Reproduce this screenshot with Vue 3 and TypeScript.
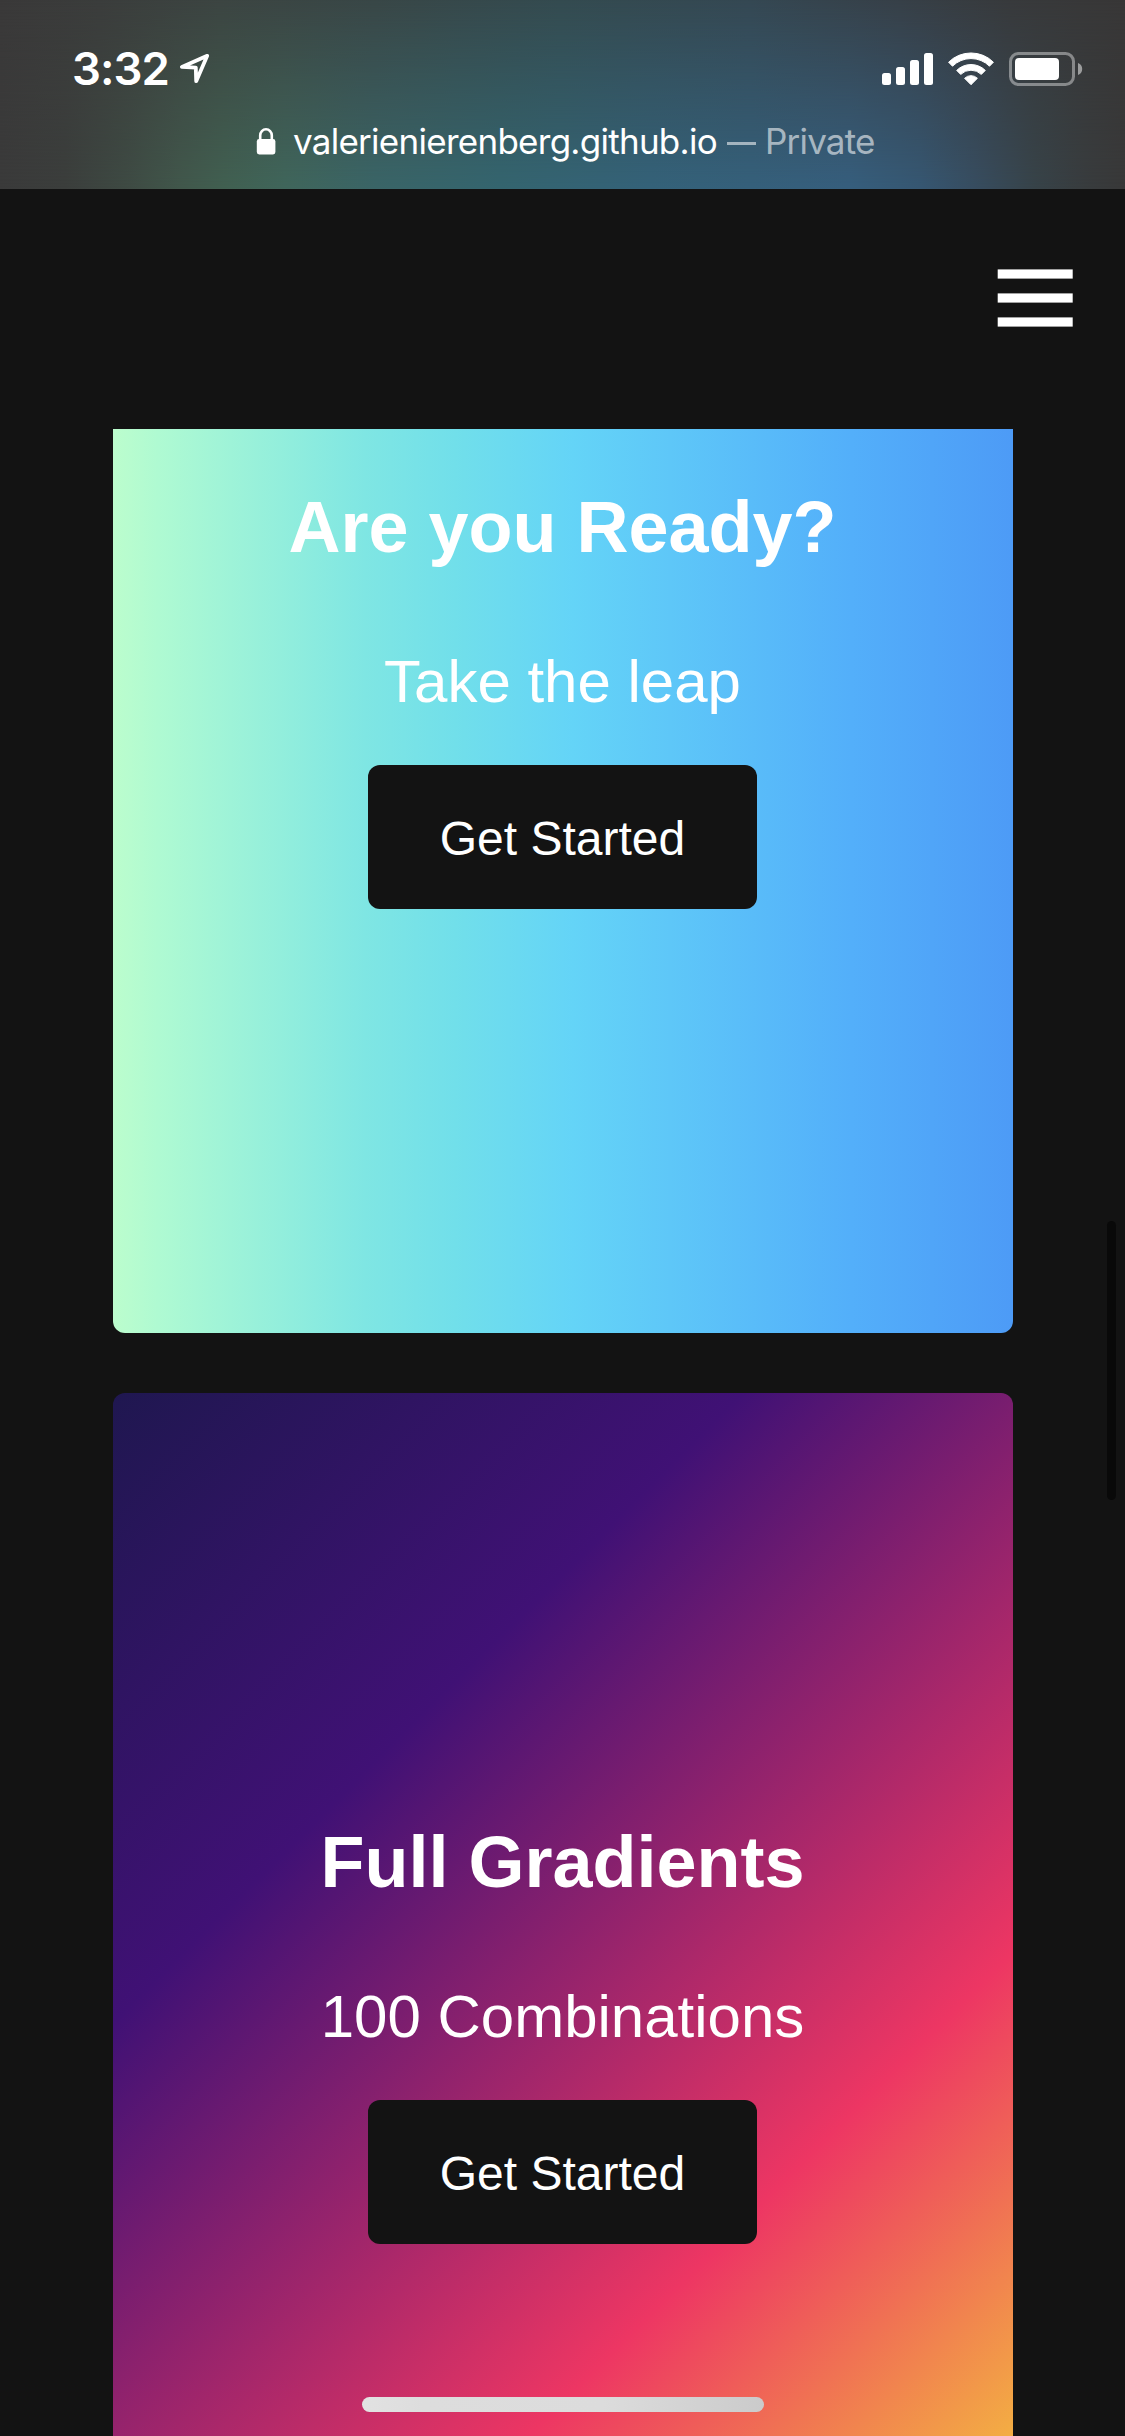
<script setup lang="ts">
interface Card {
  title: string
  text: string
  action: string
  theme: string
}

const cards: Card[] = [
  { title: 'Are you Ready?', text: 'Take the leap', action: 'Get Started', theme: 'mint' },
  { title: 'Full Gradients', text: '100 Combinations', action: 'Get Started', theme: 'sunset' },
]
</script>

<template>
  <div class="screen">
    <header class="browser">
      <div class="status">
        <div class="clock">
          <span class="time">3:32</span>
          <svg class="location" width="32" height="32" viewBox="0 0 32 32">
            <path d="M28.2 3.8 L2.9 14.9 L16.8 15.6 L17.2 29.2 Z" fill="none" stroke="#fff" stroke-width="3.8" stroke-linejoin="round" />
          </svg>
        </div>
        <svg class="indicators" width="204" height="36" viewBox="880 51 204 36">
          <g fill="#fff">
            <rect x="882" y="73" width="9" height="12" rx="2.5" />
            <rect x="896" y="67" width="9" height="18" rx="2.5" />
            <rect x="910" y="60" width="9" height="25" rx="2.5" />
            <rect x="924" y="53" width="9" height="32" rx="2.5" />
            <path d="M948.6 62.2 a31.8 31.8 0 0 1 44.8 0 l-3.9 4 a26.2 26.2 0 0 0 -37 0 z" stroke="#fff" stroke-width="1" stroke-linejoin="round" />
            <path d="M956.7 70.4 a20.3 20.3 0 0 1 28.6 0 l-4 4 a14.7 14.7 0 0 0 -20.6 0 z" stroke="#fff" stroke-width="1" stroke-linejoin="round" />
            <path d="M964.6 78.3 a9.1 9.1 0 0 1 12.8 0 l-6.4 6.4 z" stroke="#fff" stroke-width="1" stroke-linejoin="round" />
            <rect x="1015" y="58" width="44" height="22" rx="4" />
          </g>
          <rect x="1010.5" y="53.5" width="63" height="31" rx="8" fill="none" stroke="#fff" stroke-opacity=".4" stroke-width="3" />
          <path d="M1078 63 a6.4 6.4 0 0 1 0 12 z" fill="#fff" fill-opacity=".5" />
        </svg>
      </div>
      <div class="address">
        <svg class="lock" width="20" height="29" viewBox="0 0 20 29">
          <path d="M4.2 14 V8.4 a5.8 6.2 0 0 1 11.6 0 V14" fill="none" stroke="#fff" stroke-width="2.6" />
          <rect x="0.8" y="12" width="18.6" height="15.4" rx="2.4" fill="#fff" />
        </svg>
        <span class="host">valerienierenberg.github.io</span>
        <span class="dash"></span>
        <span class="private">Private</span>
      </div>
    </header>

    <nav class="nav">
      <svg class="menu" width="76" height="60" viewBox="0 0 76 60" fill="#fff">
        <rect x=".7" y=".4" width="75" height="9.2" />
        <rect x=".7" y="24.4" width="75" height="9.2" />
        <rect x=".7" y="48.4" width="75" height="9.2" />
      </svg>
    </nav>

    <main class="feed">
      <section v-for="card in cards" :key="card.title" class="card" :class="card.theme">
        <h2>{{ card.title }}</h2>
        <p>{{ card.text }}</p>
        <button type="button">{{ card.action }}</button>
      </section>
    </main>

    <div class="scrollbar"></div>
    <div class="home"></div>
  </div>
</template>

<style>
body {
  margin: 0;
  background: #131313;
}
</style>

<style scoped>
.screen {
  position: relative;
  display: flex;
  flex-direction: column;
  width: 1125px;
  height: 2436px;
  overflow: hidden;
  background: #131313;
  color: #fff;
  font-family: 'Liberation Sans', Arial, sans-serif;
}

.browser {
  position: relative;
  flex: none;
  height: 189px;
  box-sizing: border-box;
  padding-top: 48px;
  font-family: Inter, 'Noto Sans', sans-serif;
  background: linear-gradient(90deg, #3a3939 0, #3b3d3c 100px, #3c4542 220px, #394747 375px, #344b50 560px, #354853 750px, #374048 900px, #383a3c 1010px, #383737 1125px);
}

.browser::before {
  content: '';
  position: absolute;
  inset: 0;
  background: linear-gradient(90deg, #3a3a3a 0, #3b3e3c 65px, #3e4a43 125px, #41574b 180px, #416051 225px, #40665b 285px, #3a6567 375px, #34656f 500px, #346279 650px, #365e7d 850px, #365772 920px, #374d60 975px, #374349 1035px, #383c3e 1085px, #383838 1125px);
  mask-image: linear-gradient(180deg, transparent, rgba(0, 0, 0, 0.52) 50%, #000);
}

.status {
  position: relative;
  display: flex;
  justify-content: space-between;
  height: 70px;
  padding: 0 41px 0 72px;
}

.clock {
  display: flex;
}

.time {
  width: 107px;
  line-height: 42px;
  font-size: 45.5px;
  font-weight: 600;
  letter-spacing: -1px;
  white-space: nowrap;
}

.location {
  margin-top: 4px;
}

.indicators {
  margin-top: 3px;
}

.address {
  position: relative;
  display: flex;
  padding-left: 256px;
  height: 48px;
  line-height: 46px;
  font-size: 35px;
  white-space: nowrap;
}

.lock {
  flex: none;
  margin-top: 9px;
}

.host {
  flex: none;
  width: 434px;
  margin-left: 17px;
  letter-spacing: -0.73px;
}

.dash {
  flex: none;
  width: 29px;
  height: 3px;
  margin-top: 24px;
  background: rgba(255, 255, 255, 0.55);
}

.private {
  margin-left: 9px;
  letter-spacing: -0.8px;
  color: rgba(255, 255, 255, 0.58);
}

.nav {
  flex: none;
  display: flex;
  justify-content: flex-end;
  height: 240px;
  box-sizing: border-box;
  padding: 80px 52px 0 0;
}

.feed {
  flex: 1;
  min-height: 0;
  display: flex;
  flex-direction: column;
  align-items: center;
  gap: 60px;
  overflow: hidden;
}

.card {
  flex: none;
  display: flex;
  flex-direction: column;
  align-items: center;
  width: 900px;
  height: 1275px;
  box-sizing: border-box;
  padding-top: 427px;
  border-radius: 12px;
}

.card:first-child {
  margin-top: -371px;
}

.mint {
  background: linear-gradient(90deg, #bcfdcd 0%, #affad2 5%, #7fe6e3 28%, #71dfea 38%, #64d4f7 51%, #53affa 82%, #4d9bf6 100%);
}

.sunset {
  background: linear-gradient(135deg, #1f1750 0%, #401175 29%, #ed3663 67.1%, #f6e734 100%);
}

.card h2 {
  margin: 0 0 77px;
  font-size: 72px;
  line-height: 84px;
  font-weight: 700;
}

.card p {
  margin: 1px 0 48px;
  font-size: 60px;
  line-height: 70px;
}

.card button {
  height: 144px;
  padding: 47px 72px 43px;
  border: 0;
  border-radius: 12px;
  background: #131313;
  color: #fff;
  font-family: inherit;
  font-size: 48px;
  line-height: 54px;
}

.scrollbar {
  position: absolute;
  top: 1221px;
  right: 9px;
  width: 9px;
  height: 279px;
  border-radius: 4.5px;
  background: #090909;
}

.home {
  position: absolute;
  left: 362px;
  bottom: 24px;
  width: 402px;
  height: 15px;
  border-radius: 7.5px;
  background: linear-gradient(90deg, #e2e2e2, #dddddd 15%, #dcdcdc 60%, #cbcbcb);
}
</style>
